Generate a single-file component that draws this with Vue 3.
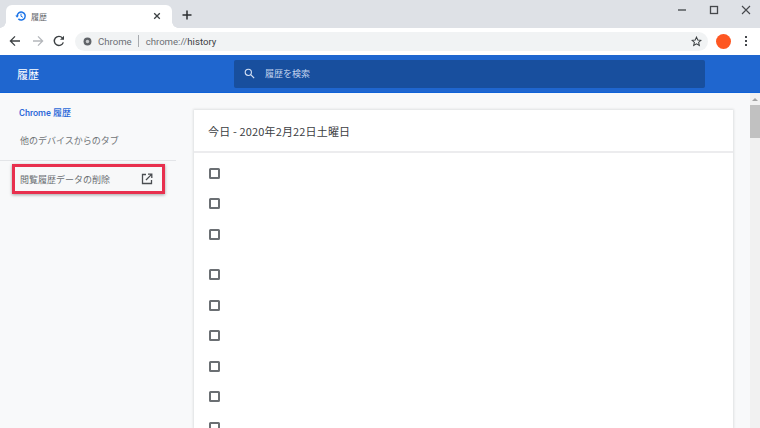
<script setup>
const groups = [3, 6]
</script>

<template>
  <div class="page">
    <div class="tabstrip">
      <div class="tab">
        <svg class="fav" viewBox="0 0 12 12" width="12" height="12"><path d="M2.2 6a4 4 0 1 1 1.2 2.9" fill="none" stroke="#1a73e8" stroke-width="1.5"/><path d="M0.3 5.6h3.6L2.1 7.8z" fill="#1a73e8"/><path d="M6 3.6v2.6l1.9 1.1" fill="none" stroke="#1a73e8" stroke-width="1"/></svg>
        <span class="tabtitle">履歴</span>
        <svg class="tabclose" viewBox="0 0 8 8" width="8" height="8"><path d="M1.2 1.2l5.6 5.6M6.8 1.2L1.2 6.8" stroke="#3c4043" stroke-width="1.3"/></svg>
      </div>
      <svg class="newtab" viewBox="0 0 10 10" width="10" height="10"><path d="M5 .5v9M.5 5h9" stroke="#2b2e31" stroke-width="1.5"/></svg>
      <div class="winctl">
        <svg viewBox="0 0 10 10" width="10" height="10"><path d="M1 5h8" stroke="#55585c" stroke-width="1.5"/></svg>
        <svg viewBox="0 0 10 10" width="10" height="10"><rect x="1.5" y="1.5" width="7" height="7" fill="none" stroke="#45484c" stroke-width="1.3"/></svg>
        <svg viewBox="0 0 10 10" width="10" height="10"><path d="M1 1l8 8M9 1l-8 8" stroke="#45484c" stroke-width="1.1"/></svg>
      </div>
    </div>
    <div class="toolbar">
      <svg class="nav" viewBox="0 0 12 12" width="12" height="12"><path d="M11 6H1.6M6 1.4L1.4 6 6 10.6" fill="none" stroke="#3c4043" stroke-width="1.3"/></svg>
      <svg class="nav" viewBox="0 0 12 12" width="12" height="12"><path d="M1 6h9.4M6 1.4L10.6 6 6 10.6" fill="none" stroke="#b4b7bb" stroke-width="1.3"/></svg>
      <svg class="nav" viewBox="0 0 12 12" width="12" height="12"><path d="M10.3 7.4A4.6 4.6 0 1 1 9.4 2.9" fill="none" stroke="#3c4043" stroke-width="1.4"/><path d="M11 .8v4H7z" fill="#3c4043"/></svg>
      <div class="omnibox">
        <svg viewBox="0 0 10 10" width="9" height="9"><circle cx="5" cy="5" r="4.4" fill="#5f6368"/><circle cx="5" cy="5" r="1.9" fill="#c9cbce"/></svg>
        <span class="chip">Chrome</span>
        <span class="sep"></span>
        <span class="url">chrome://<b>history</b></span>
        <svg class="star" viewBox="0 0 12 12" width="11" height="11"><path d="M6 1.2l1.4 3.2 3.5.3-2.6 2.3.8 3.4L6 8.6l-3.1 1.8.8-3.4L1.1 4.7l3.5-.3z" fill="none" stroke="#3c4043" stroke-width="1.1"/></svg>
      </div>
      <span class="avatar"></span>
      <span class="dots"><i></i><i></i><i></i></span>
    </div>
    <header class="bluebar">
      <div class="brand">履歴</div>
      <div class="search">
        <svg viewBox="0 0 12 12" width="11" height="11"><circle cx="4.7" cy="4.7" r="3.4" fill="none" stroke="#d5e1f5" stroke-width="1.2"/><path d="M7.3 7.3l3.8 3.8" stroke="#d5e1f5" stroke-width="1.3"/></svg>
        <span>履歴を検索</span>
      </div>
    </header>
    <div class="main">
      <aside class="side">
        <div class="sel">Chrome 履歴</div>
        <div class="other">他のデバイスからのタブ</div>
        <div class="rule"></div>
        <div class="clear">
          <span>閲覧履歴データの削除</span>
          <svg viewBox="0 0 12 12" width="12" height="12"><path d="M5 1.5H1.5v9h9V7" fill="none" stroke="#4a4d51" stroke-width="1.3"/><path d="M7 1.2h3.8V5M10.6 1.4L5 7" fill="none" stroke="#4a4d51" stroke-width="1.3"/></svg>
        </div>
      </aside>
      <section class="card">
        <div class="cardhead">今日 - 2020年2月22日土曜日</div>
        <div v-for="(n, g) in groups" :key="g" class="group">
          <div v-for="i in n" :key="i" class="row"><span class="check"></span></div>
        </div>
      </section>
      <div class="scroll">
        <span class="up"></span>
        <span class="thumb"></span>
      </div>
    </div>
  </div>
</template>

<style>
html, body { margin: 0; overflow: hidden; }
</style>

<style scoped>
.page { width: 760px; height: 428px; overflow: hidden; display: flex; flex-direction: column; background: #f8f9fa; font-family: "Noto Sans CJK JP", Roboto, sans-serif; }
.tabstrip { height: 28px; flex: none; background: #dee1e6; display: flex; align-items: flex-end; padding-left: 6px; box-sizing: border-box; }
.tab { position: relative; width: 166px; height: 23px; background: #fff; border-radius: 6px 6px 0 0; display: flex; align-items: center; padding: 0 11px 1px 9px; box-sizing: border-box; }
.tab::before, .tab::after { content: ""; position: absolute; bottom: 0; width: 6px; height: 6px; }
.tab::before { left: -6px; background: radial-gradient(circle at 0 0, transparent 5.5px, #fff 6px); }
.tab::after { right: -6px; background: radial-gradient(circle at 100% 0, transparent 5.5px, #fff 6px); }
.fav { flex: none; }
.tabtitle { margin-left: 4px; font-size: 8px; color: #5f6368; flex: 1; }
.newtab { margin: 0 0 8px 10px; }
.winctl { margin-left: auto; align-self: flex-start; display: flex; gap: 22px; padding: 5px 9px 0 0; margin-right: 0; }
.toolbar { height: 26.5px; flex: none; background: #fff; display: flex; align-items: center; padding-left: 9px; box-sizing: border-box; }
.nav { margin-right: 11px; flex: none; }
.nav:nth-child(2) { margin-right: 9px; }
.nav:nth-child(3) { margin-right: 10px; }
.omnibox { width: 633px; height: 19px; border-radius: 10px; background: #f1f3f4; display: flex; align-items: center; padding: 0 6.5px 0 8px; box-sizing: border-box; font-family: Roboto, sans-serif; font-size: 9.6px; color: #6c7075; flex: none; }
.chip { margin-left: 6px; }
.sep { width: 1px; height: 12px; background: #a8abaf; margin: 0 7px 0 6px; }
.url b { font-weight: 400; color: #3c4043; }
.star { margin-left: auto; }
.avatar { width: 15px; height: 15px; border-radius: 50%; background: #fe5722; margin-left: 7.5px; flex: none; }
.dots { display: flex; flex-direction: column; gap: 2px; margin-left: 14.5px; }
.dots i { width: 2px; height: 2px; background: #45484c; display: block; }
.bluebar { height: 38.5px; flex: none; background: #1f66cf; border-bottom: 1px solid #0f62d8; display: flex; align-items: center; box-sizing: border-box; padding-top: 1px; }
.brand { width: 234px; padding-left: 17px; box-sizing: border-box; font-size: 11px; color: #fff; }
.search { width: 471px; height: 28px; background: #184f9e; border-radius: 2px; display: flex; align-items: center; padding-left: 10px; box-sizing: border-box; font-size: 9px; color: #c3d4ee; gap: 10px; }
.main { flex: 1; display: flex; min-height: 0; }
.side { width: 194px; flex: none; display: flex; flex-direction: column; }
.sel { margin: 14px 0 0 19px; font-size: 9px; line-height: 13px; color: #2a68d8; font-family: Roboto, "Noto Sans CJK JP", sans-serif; font-weight: 500; }
.other { margin: 14px 0 0 20px; font-size: 9px; line-height: 13px; color: #6f7377; }
.rule { width: 176px; height: 1px; background: #e3e5e8; margin-top: 13px; }
.clear { width: 153.5px; height: 30px; margin: 3px 0 0 11.5px; box-sizing: border-box; border: 3px solid #e8304e; background: #f7f8f9; box-shadow: 0 1px 3px rgba(0,0,0,.35); display: flex; align-items: center; justify-content: space-between; padding: 0 9px 0 5.5px; font-size: 9px; color: #6a6e72; }
.card { width: 539px; flex: none; margin-top: 17px; background: #fff; box-shadow: 0 0 2px 1px rgba(60,64,67,.12); }
.cardhead { height: 41px; border-bottom: 2px solid #ececee; display: flex; align-items: center; padding-left: 14px; font-size: 11px; letter-spacing: .15px; color: #3c4043; }
.group { padding-top: 5px; margin-bottom: 5px; }
.row { height: 30.5px; display: flex; align-items: center; padding-left: 15px; }
.check { width: 11px; height: 11px; box-sizing: border-box; border: 2px solid #6b6f73; border-radius: 1.5px; }
.scroll { width: 10px; margin-left: auto; background: #f1f1f1; display: flex; flex-direction: column; align-items: center; }
.up { width: 0; height: 0; margin-top: 5px; border-left: 3px solid transparent; border-right: 3px solid transparent; border-bottom: 3px solid #a3a3a3; }
.thumb { width: 10px; height: 33px; margin-top: 4px; background: #c1c1c1; }
</style>
